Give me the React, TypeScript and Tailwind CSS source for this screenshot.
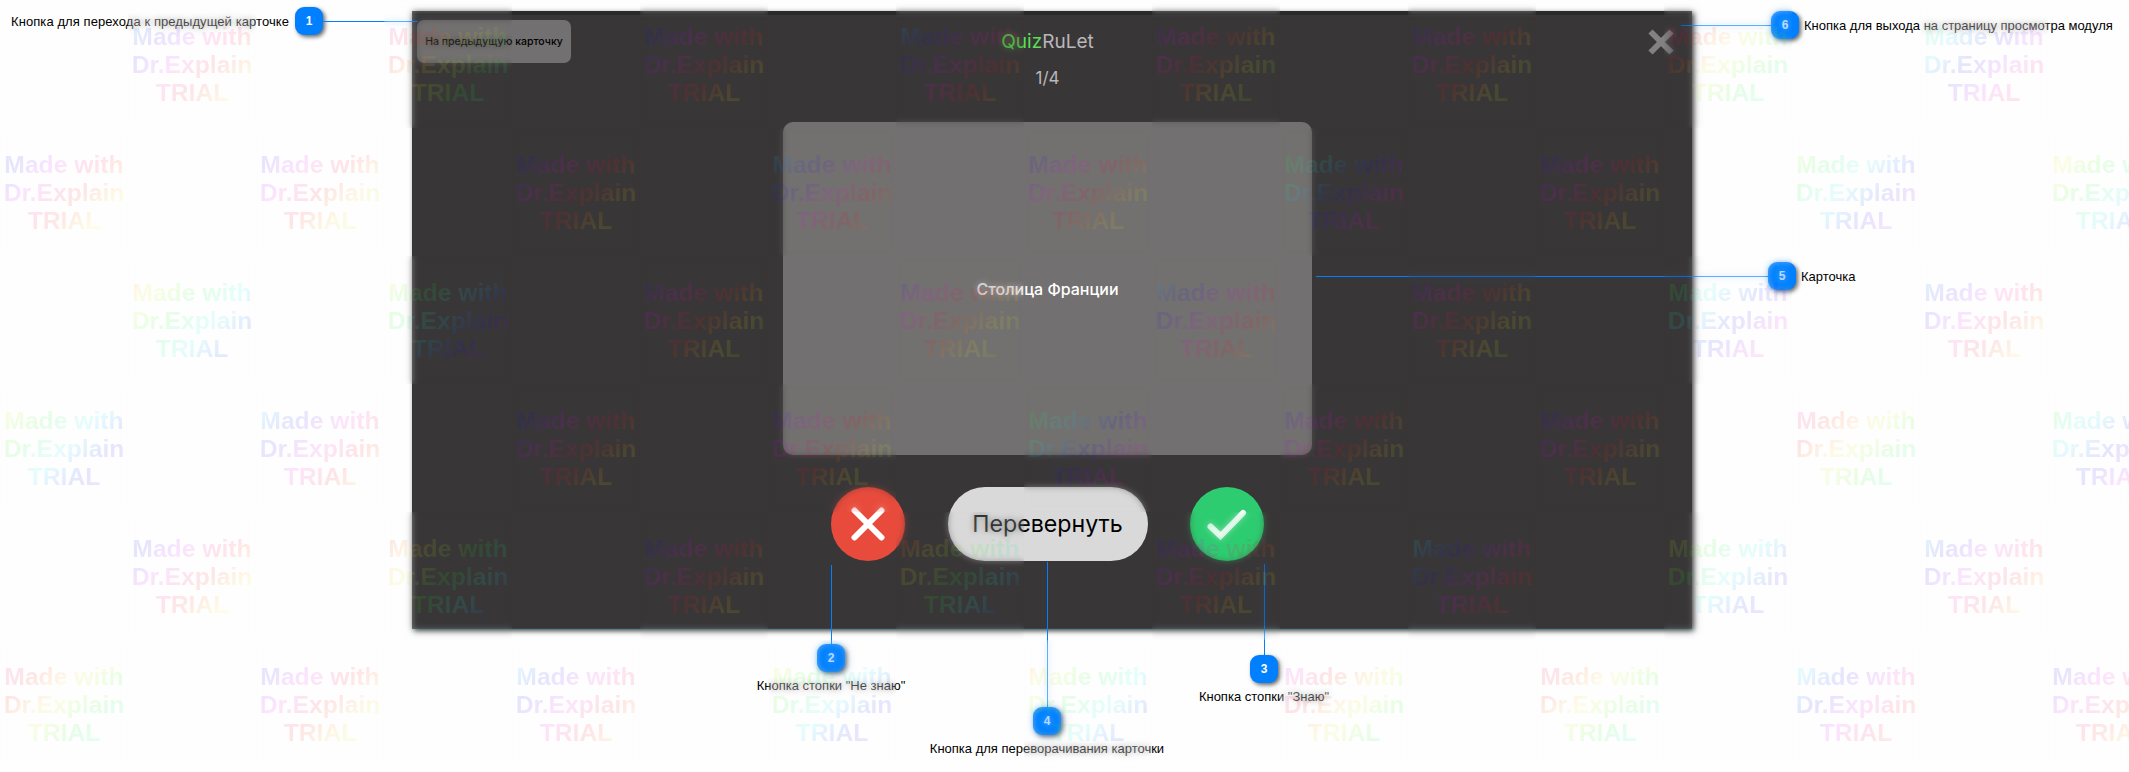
const COLUMNS = 17;

// Starting hue of each stamp, keyed by row; stamps alternate like a checkerboard.
const STAMP_HUES: number[][] = [
  [215, 320, 230, 200, 265, 250, 325, 150],
  [230, 245, 235, 190, 240, 130, 240, 90, 50],
  [40, 80, 255, 260, 200, 260, 120, 215],
  [70, 195, 230, 250, 130, 245, 240, 320, 130],
  [230, 10, 235, 15, 240, 180, 65, 210],
  [325, 240, 200, 70, 40, 295, 330, 180, 235],
];

function rainbow(start: number) {
  const stops = Array.from({ length: 11 }, (_, i) => {
    const hue = (start - 15 + i * 25.5 + 360) % 360;
    return `hsl(${hue} 100% 50% / 0.1)`;
  });
  return `linear-gradient(135deg, ${stops.join(", ")})`;
}

function Stamp({ hue }: { hue: number }) {
  return (
    <div className="grid h-32 w-32">
      <div className="col-start-1 row-start-1 opacity-40 backdrop-blur-[3px]" />
      <div className="z-10 col-start-1 row-start-1 pt-[22.5px] pl-[2px]">
        <div
          className="w-[124px] bg-clip-text text-center text-[24.7px] leading-[28.3px] font-bold whitespace-nowrap text-transparent"
          style={{ backgroundImage: rainbow(hue) }}
        >
          Made with
          <br />
          Dr.Explain
          <br />
          TRIAL
        </div>
      </div>
    </div>
  );
}

function Watermark() {
  return (
    <div className="pointer-events-none absolute inset-0 grid auto-rows-[128px] grid-cols-[repeat(17,128px)] content-start overflow-hidden">
      {STAMP_HUES.flatMap((hues, row) =>
        Array.from({ length: COLUMNS }, (_, col) =>
          (row + col) % 2 === 1 ? (
            <Stamp key={`${row}-${col}`} hue={hues[Math.floor(col / 2)]} />
          ) : (
            <div key={`${row}-${col}`} />
          ),
        ),
      )}
    </div>
  );
}

function Badge({ n }: { n: number }) {
  return (
    <div className="flex size-7 shrink-0 items-center justify-center rounded-[9px] bg-[#0080ff] text-[12px] font-bold text-white shadow-[2px_2px_4px_rgba(0,0,0,0.6)]">
      {n}
    </div>
  );
}

function Callouts() {
  return (
    <div className="text-[13px] leading-4 whitespace-nowrap text-black">
      <div className="absolute top-[7px] left-[11px] flex h-7 items-center">
        <span className="w-[284px] pt-px tracking-[0.08px]">Кнопка для перехода к предыдущей карточке</span>
        <Badge n={1} />
        <div className="h-px w-[95px] bg-[#0080ff]" />
      </div>
      <div className="absolute top-[11px] left-[1681px] flex h-7 items-center">
        <div className="h-px w-[90px] bg-[#0080ff]" />
        <Badge n={6} />
        <span className="pt-px pl-[5px]">Кнопка для выхода на страницу просмотра модуля</span>
      </div>
      <div className="absolute top-[262px] left-[1316px] flex h-7 items-center">
        <div className="h-px w-[452px] bg-[#0080ff]" />
        <Badge n={5} />
        <span className="pt-px pl-[5px]">Карточка</span>
      </div>
      <div className="absolute top-[565px] left-[681px] flex w-[300px] flex-col items-center">
        <div className="ml-px h-[79px] w-px bg-[#0080ff]" />
        <Badge n={2} />
        <span className="mt-1.5">Кнопка стопки "Не знаю"</span>
      </div>
      <div className="absolute top-[562px] left-[897px] flex w-[300px] flex-col items-center">
        <div className="ml-px h-[145px] w-px bg-[#0080ff]" />
        <Badge n={4} />
        <span className="mt-1.5">Кнопка для переворачивания карточки</span>
      </div>
      <div className="absolute top-[564px] left-[1114px] flex w-[300px] flex-col items-center">
        <div className="ml-px h-[91px] w-px bg-[#0080ff]" />
        <Badge n={3} />
        <span className="mt-1.5">Кнопка стопки "Знаю"</span>
      </div>
    </div>
  );
}

function QuizWindow() {
  return (
    <div className="flex h-[618px] w-[1280px] flex-col items-center border-t-4 border-b border-t-[#2b2a2b] border-b-[#1d4f56] bg-[#393637] font-[Inter,sans-serif] shadow-[2px_2px_5px_rgba(0,0,0,0.75)]">
      <div className="grid h-[107px] w-full grid-cols-3 items-start pt-[5px] pr-[17px] pl-[5px]">
        <button className="h-[43px] w-[154px] rounded-[7px] bg-[#737071] text-[10.5px] font-medium whitespace-nowrap text-black">
          На предыдущую карточку
        </button>
        <div className="flex flex-col items-center gap-[11px] pt-[9px] pl-[3px]">
          <div className="text-[19px] leading-[26px] text-[#b9b7b8]">
            <span className="text-[#5be052]">Quiz</span>RuLet
          </div>
          <div className="text-[17px] leading-[24px] text-[#b9b7b8]">1/4</div>
        </div>
        <div className="flex justify-end pt-2">
          <svg width="28" height="28" viewBox="0 0 28 28">
            <path d="M3.5 3.5 24.5 24.5M24.5 3.5 3.5 24.5" stroke="#838182" strokeWidth="6" />
          </svg>
        </div>
      </div>
      <div className="mr-[9px] flex h-[333px] w-[529px] items-center justify-center rounded-[10px] bg-[#737071] text-[16px] font-medium text-white">
        Столица Франции
      </div>
      <div className="flex items-center gap-[42.5px] pt-[32px] pr-[9px]">
        <div className="flex h-[74px] w-[74px] items-center justify-center rounded-full bg-[#e84b3c]">
          <svg width="36" height="36" viewBox="0 0 36 36">
            <path d="M4.5 4.5 31.5 31.5M31.5 4.5 4.5 31.5" stroke="#fff" strokeWidth="6" strokeLinecap="round" />
          </svg>
        </div>
        <div className="flex h-[74px] w-[200px] items-center justify-center rounded-full bg-[#d9d9d9] text-[23.2px] text-black">
          Перевернуть
        </div>
        <div className="flex h-[74px] w-[74px] items-center justify-center rounded-full bg-[#2ecc71]">
          <svg width="42" height="34" viewBox="0 0 42 34">
            <path d="M4.5 19.5 14.5 29 37 6" stroke="#fff" strokeWidth="6" fill="none" strokeLinecap="round" />
          </svg>
        </div>
      </div>
    </div>
  );
}

export default function App() {
  return (
    <div className="relative h-[772px] w-[2129px] overflow-hidden bg-[#fefefe] pt-[11px] pl-[412px] font-['Liberation_Sans',Arial,sans-serif]">
      <QuizWindow />
      <Callouts />
      <Watermark />
    </div>
  );
}
